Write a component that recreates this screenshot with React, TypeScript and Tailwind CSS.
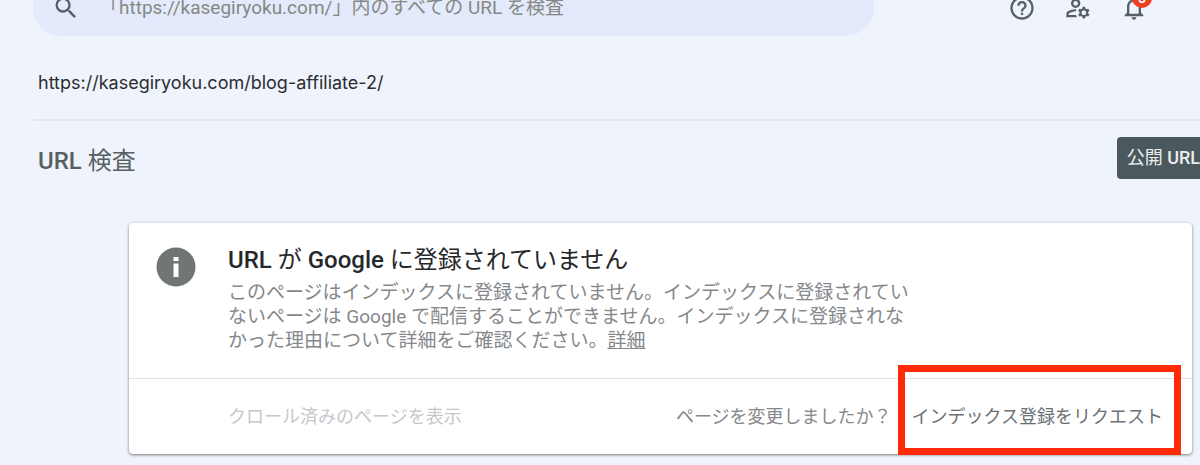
import {
  MdOutlineHelpOutline,
  MdOutlineManageAccounts,
  MdOutlineNotifications,
  MdSearch,
} from "react-icons/md";

const InfoIcon = () => (
  <svg
    viewBox="0 0 40 40"
    className="mt-6 ml-[27px] size-10 shrink-0"
    aria-hidden="true"
  >
    <circle cx="20" cy="20" r="19.5" fill="#707575" />
    <rect x="17.5" y="10" width="5" height="4" fill="#fff" />
    <rect x="17.5" y="16.5" width="5" height="13.5" fill="#fff" />
  </svg>
);

const Header = () => (
  <header className="flex h-9 items-end justify-between overflow-hidden pr-[52px] pl-[33px]">
    <label className="flex h-14 w-[841px] items-center rounded-full bg-[#e3eafb] pl-[19px]">
      <MdSearch className="size-7 shrink-0 text-[#566063]" />
      <input
        type="text"
        aria-label="URL を検査"
        placeholder="「https://kasegiryoku.com/」内のすべての URL を検査"
        className="ml-5 grow bg-transparent text-[19px] outline-none placeholder:text-[#868884]"
      />
    </label>
    <nav className="flex h-14 items-center gap-7 text-[#566063]">
      <button type="button" aria-label="ヘルプ">
        <MdOutlineHelpOutline className="size-7" />
      </button>
      <button type="button" aria-label="ユーザーと権限">
        <MdOutlineManageAccounts className="size-7" />
      </button>
      <button type="button" aria-label="通知" className="relative">
        <MdOutlineNotifications className="size-7" />
        <span className="absolute -top-1.5 -right-1 flex size-5 items-center justify-center rounded-full bg-[#f0401f] text-sm font-medium text-white">
          8
        </span>
      </button>
    </nav>
  </header>
);

const StatusCard = () => (
  <section className="mt-11 mr-2 ml-[129px] rounded-sm bg-white shadow-[0_1px_3px_rgba(0,0,0,0.5)]">
    <div className="flex h-[156px] border-b border-[#dfe1e6]">
      <InfoIcon />
      <div className="ml-8 pt-[21px]">
        <h2 className="text-2xl leading-8 text-[#25282b]">
          <span className="font-medium">URL</span> が{" "}
          <span className="font-medium">Google</span> に登録されていません
        </h2>
        <p className="mt-[5px] max-w-[690px] text-[19px] leading-6 text-[#85888b]">
          このページはインデックスに登録されていません。インデックスに登録されていないページは
          Google
          で配信することができません。インデックスに登録されなかった理由について詳細をご確認ください。
          <a href="#details" className="underline">
            詳細
          </a>
        </p>
      </div>
    </div>
    <div className="flex h-[75px] items-center pr-[29px] pl-[99px] text-lg">
      <button type="button" disabled className="text-[#c6c8cc]">
        クロール済みのページを表示
      </button>
      <span className="ml-auto text-[#85888b]">ページを変更しましたか？</span>
      <div className="relative ml-5">
        <button type="button" className="text-[#6b7075]">
          インデックス登録をリクエスト
        </button>
        <div className="pointer-events-none absolute -top-[38px] -right-[18px] -bottom-6 -left-[14px] border-[7px] border-[#ff2a08]" />
      </div>
    </div>
  </section>
);

const App = () => {
  return (
    <div
      lang="ja"
      className="min-h-screen overflow-hidden bg-[#eff3fb] font-['Roboto','Noto_Sans_CJK_JP',sans-serif]"
    >
      <Header />
      <main>
        <p className="mt-8 ml-[38px] font-['Inter',sans-serif] text-lg leading-[30px] text-[#2c2e30]">
          https://kasegiryoku.com/blog-affiliate-2/
        </p>
        <hr className="mt-[21px] ml-[33px] border-t-2 border-[#e5e7ea]" />
        <div className="mt-4 flex items-end justify-between pl-[38px]">
          <h1 className="text-2xl leading-9 text-[#566063]">
            <span className="font-medium">URL</span> 検査
          </h1>
          <button
            type="button"
            className="h-[42px] rounded-l-sm bg-[#4b595e] pl-2.5 text-lg whitespace-nowrap text-[#eceeee]"
          >
            公開 <span className="font-medium">URL</span>
          </button>
        </div>
        <StatusCard />
      </main>
    </div>
  );
};

export default App;
